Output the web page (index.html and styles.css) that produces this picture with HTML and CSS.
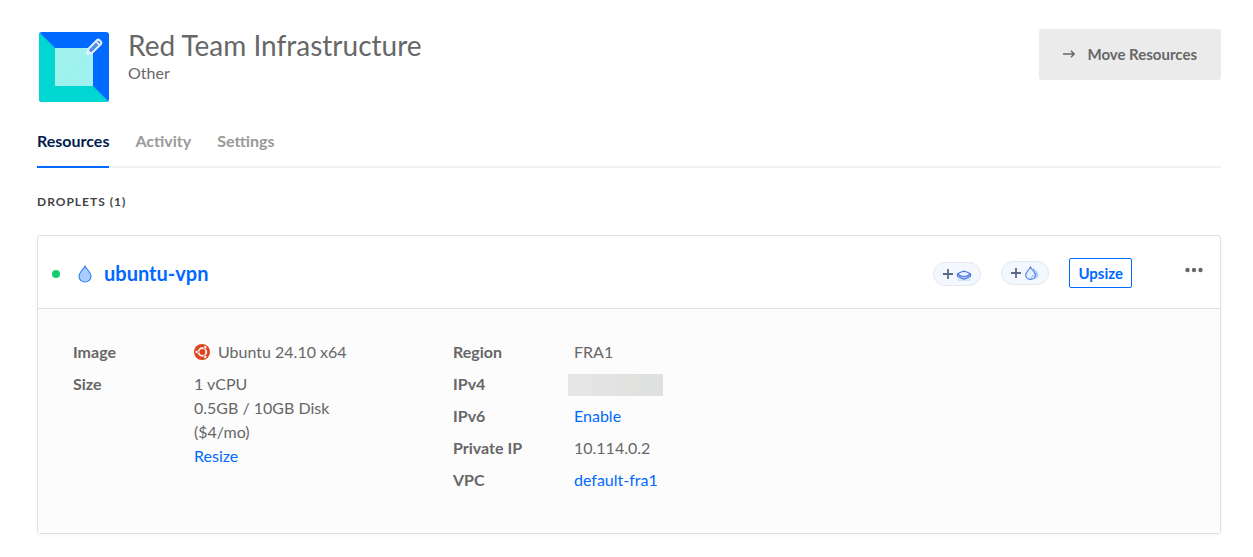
FILE: index.html
```html
<!DOCTYPE html>
<html lang="en">
<head>
<meta charset="utf-8">
<meta name="viewport" content="width=device-width, initial-scale=1">
<title>Red Team Infrastructure</title>
<link rel="stylesheet" href="styles.css">
</head>
<body>
<main class="page">
  <header class="project">
    <svg class="project-logo" viewBox="0 0 70 70" aria-hidden="true">
      <defs><clipPath id="round"><rect width="70" height="70" rx="3"/></clipPath></defs>
      <g clip-path="url(#round)">
        <rect width="70" height="70" fill="#0069ff"/>
        <path d="M0 0 16 16V54H54L70 70H0Z" fill="#00d7d2"/>
        <rect x="16" y="16" width="38" height="38" fill="#a0f2ee"/>
        <path d="M16 54 54 16" stroke="#8eeae6" stroke-width=".6"/>
      </g>
      <path d="M48 22 49.300 17 58 8.100Q59.200 7.100 60.400 8.100L62 9.700Q63 10.800 62 12L53.200 20.800Z" fill="#4b8fe8" stroke="#e5f0ff" stroke-width="2" stroke-linejoin="round"/>
      <path d="M57 9.500 60.600 13.100" stroke="#e5f0ff" stroke-width="1.600"/>
      <path d="M49 17.500 52.500 21 48 22Z" fill="#e5f0ff"/>
    </svg>
    <div class="project-text">
      <h1 class="project-name">Red Team Infrastructure</h1>
      <p class="project-kind">Other</p>
    </div>
    <button class="move" type="button">
      <svg class="move-arrow" viewBox="0 0 12 8" aria-hidden="true"><path d="M0 4H11M8 .800 11.200 4 8 7.200" fill="none" stroke="#676767" stroke-width="1.400"/></svg>
      Move Resources
    </button>
  </header>

  <nav class="tabs">
    <a class="tab tab-active" href="#resources">Resources</a>
    <a class="tab" href="#activity">Activity</a>
    <a class="tab" href="#settings">Settings</a>
  </nav>

  <h2 class="section-title">DROPLETS (1)</h2>

  <section class="card">
    <div class="card-head">
      <span class="status"></span>
      <svg class="drop" viewBox="0 0 14 18" aria-hidden="true"><path d="M7 1.200C5 4.600 1 7.500 1 11.300A6 5.700 0 0 0 13 11.300C13 7.500 9 4.600 7 1.200Z" fill="#a8ceff" stroke="#2c7df2" stroke-width="1.100"/></svg>
      <a class="droplet-name" href="#droplet">ubuntu-vpn</a>
      <div class="actions">
        <button class="pill" type="button" aria-label="Add volume">
          <svg class="pill-icon" viewBox="0 0 30 16" aria-hidden="true">
            <path d="M1 8H11M6 3V13" stroke="#5b6987" stroke-width="1.800"/>
            <path d="M16 9H28V15H16Z" fill="#cfe2ff"/>
            <path d="M15.500 8 22 5 28.500 8V10.200L22 13.200 15.500 10.200Z" fill="#b7d3ff" stroke="#4d72dc" stroke-width="1.100" stroke-linejoin="round"/>
            <path d="M15.500 8Q22 3 28.500 8Q22 13 15.500 8Z" fill="#edf5ff" stroke="#4d72dc" stroke-width="1.100"/>
          </svg>
        </button>
        <button class="pill pill-raised" type="button" aria-label="Add droplet">
          <svg class="pill-icon" viewBox="0 0 30 16" aria-hidden="true">
            <path d="M1 8H11M6 3V13" stroke="#5b6987" stroke-width="1.800"/>
            <path d="M23 2.500C25 5 28.500 7 28.500 10A4.800 4.500 0 0 1 23 14Z" fill="#a9ccff"/>
            <path d="M20.500 2C19.200 4.700 15.700 7 15.700 10A4.800 4.400 0 0 0 25.300 10C25.300 7 21.800 4.700 20.500 2Z" fill="#e2efff" stroke="#4d72dc" stroke-width="1.100"/>
            <path d="M23 10Q23 12 21 12.500" fill="none" stroke="#78a8f5"/>
          </svg>
        </button>
        <button class="upsize" type="button">Upsize</button>
        <button class="more" type="button" aria-label="More">
          <svg class="more-icon" viewBox="0 0 18 6" aria-hidden="true"><g fill="#676767"><circle cx="2.500" cy="3" r="2.200"/><circle cx="9" cy="3" r="2.200"/><circle cx="15.500" cy="3" r="2.200"/></g></svg>
        </button>
      </div>
    </div>
    <div class="card-body">
      <dl class="facts">
        <dt>Image</dt>
        <dd class="os">
          <svg class="os-icon" viewBox="0 0 16 16" aria-hidden="true">
            <circle cx="8" cy="8" r="8" fill="#e0431f"/>
            <circle cx="8.400" cy="8" r="3.900" fill="none" stroke="#fff" stroke-width="1.700"/>
            <g fill="#fff" stroke="#e0431f" stroke-width=".8"><circle cx="2.800" cy="8" r="1.700"/><circle cx="11.200" cy="3.200" r="1.700"/><circle cx="11.200" cy="12.800" r="1.700"/></g>
          </svg>
          Ubuntu 24.10 x64
        </dd>
        <dt>Size</dt>
        <dd>1 vCPU<br>0.5GB / 10GB Disk<br>($4/mo)<br><a href="#resize">Resize</a></dd>
      </dl>
      <dl class="facts">
        <dt>Region</dt>
        <dd>FRA1</dd>
        <dt>IPv4</dt>
        <dd><span class="redacted"></span></dd>
        <dt>IPv6</dt>
        <dd><a href="#ipv6">Enable</a></dd>
        <dt>Private IP</dt>
        <dd>10.114.0.2</dd>
        <dt>VPC</dt>
        <dd><a href="#vpc">default-fra1</a></dd>
      </dl>
    </div>
  </section>
</main>
</body>
</html>
```
FILE: styles.css
```css
* { box-sizing: border-box; }

body {
  margin: 0;
  background: #fff;
  color: #676767;
  font: 16px/24px Lato, "Open Sans", sans-serif;
}

h1, h2, p, dl, dd { margin: 0; }
a { color: #0069ff; text-decoration: none; }
button { font: inherit; cursor: pointer; }
svg { display: block; flex: none; }

.page { padding: 29px 32px 22px 37px; }

.project { display: flex; align-items: flex-start; }
.project-logo { width: 70px; height: 70px; margin: 3px 19px 0 2px; }
.project-text { flex: 1; }
.project-name { font-size: 28px; line-height: 32px; font-weight: 400; }
.project-kind { line-height: 24px; }

.move {
  display: flex;
  align-items: center;
  gap: 12px;
  height: 51px;
  padding: 0 24px 2px;
  border: 0;
  border-radius: 3px;
  background: #ebebeb;
  color: #676767;
  font-size: 15px;
  font-weight: 700;
}
.move-arrow { width: 12px; height: 8px; }

.tabs {
  display: flex;
  gap: 26px;
  margin-top: 27px;
  box-shadow: inset 0 -2px #f1f1f1;
}
.tab {
  padding-bottom: 13px;
  border-bottom: 2px solid transparent;
  color: #999;
  font-weight: 700;
}
.tab-active { border-color: #0069ff; color: #031b4e; }

.section-title {
  margin: 22px 0 21px;
  color: #444;
  font-size: 12px;
  line-height: 24px;
  font-weight: 700;
  letter-spacing: 1px;
}

.card {
  border: 1px solid #dfdfdf;
  border-radius: 3px;
  box-shadow: 0 2px 4px rgba(0, 0, 0, .03);
}
.card-head {
  display: flex;
  align-items: center;
  height: 73px;
  padding: 3px 17px 0 14px;
  border-bottom: 1px solid #dfdfdf;
}
.status { width: 8px; height: 8px; border-radius: 50%; background: #15cd72; }
.drop { width: 14px; height: 18px; margin: 0 12px 0 18px; }
.droplet-name { padding-bottom: 2px; font-size: 20px; font-weight: 700; }

.actions { display: flex; align-items: center; gap: 20px; margin-left: auto; }
.pill {
  display: flex;
  align-items: center;
  justify-content: center;
  width: 48px;
  height: 24px;
  padding: 0;
  border: 1px solid #e5e8ed;
  border-radius: 12px;
  background: #f3f8ff;
}
.pill-raised { margin-bottom: 2px; }
.pill-icon { width: 30px; height: 16px; }
.upsize {
  height: 30px;
  margin-bottom: 2px;
  padding: 0 8px;
  border: 1px solid #0069ff;
  border-radius: 2px;
  background: #fff;
  color: #0069ff;
  font-size: 15px;
  font-weight: 700;
}
.more { margin: 0 0 8px 33px; padding: 0; border: 0; background: none; }
.more-icon { width: 18px; height: 6px; }

.card-body {
  display: grid;
  grid-template-columns: 380px 1fr;
  padding: 31px 35px 41px;
  background: #fcfcfc;
}
.facts {
  display: grid;
  grid-template-columns: 121px 1fr;
  align-content: start;
  row-gap: 8px;
}
.facts dt { font-weight: 700; }
.os { display: flex; align-items: center; gap: 8px; }
.os-icon { width: 16px; height: 16px; }
.redacted {
  display: block;
  width: 95px;
  height: 22px;
  margin: 2px 0 0 -6px;
  background: linear-gradient(90deg, #e6e6e6 25%, #e3e3e3 25% 50%, #e2e2e1 50% 75%, #dfe1e0 75%);
}
```
